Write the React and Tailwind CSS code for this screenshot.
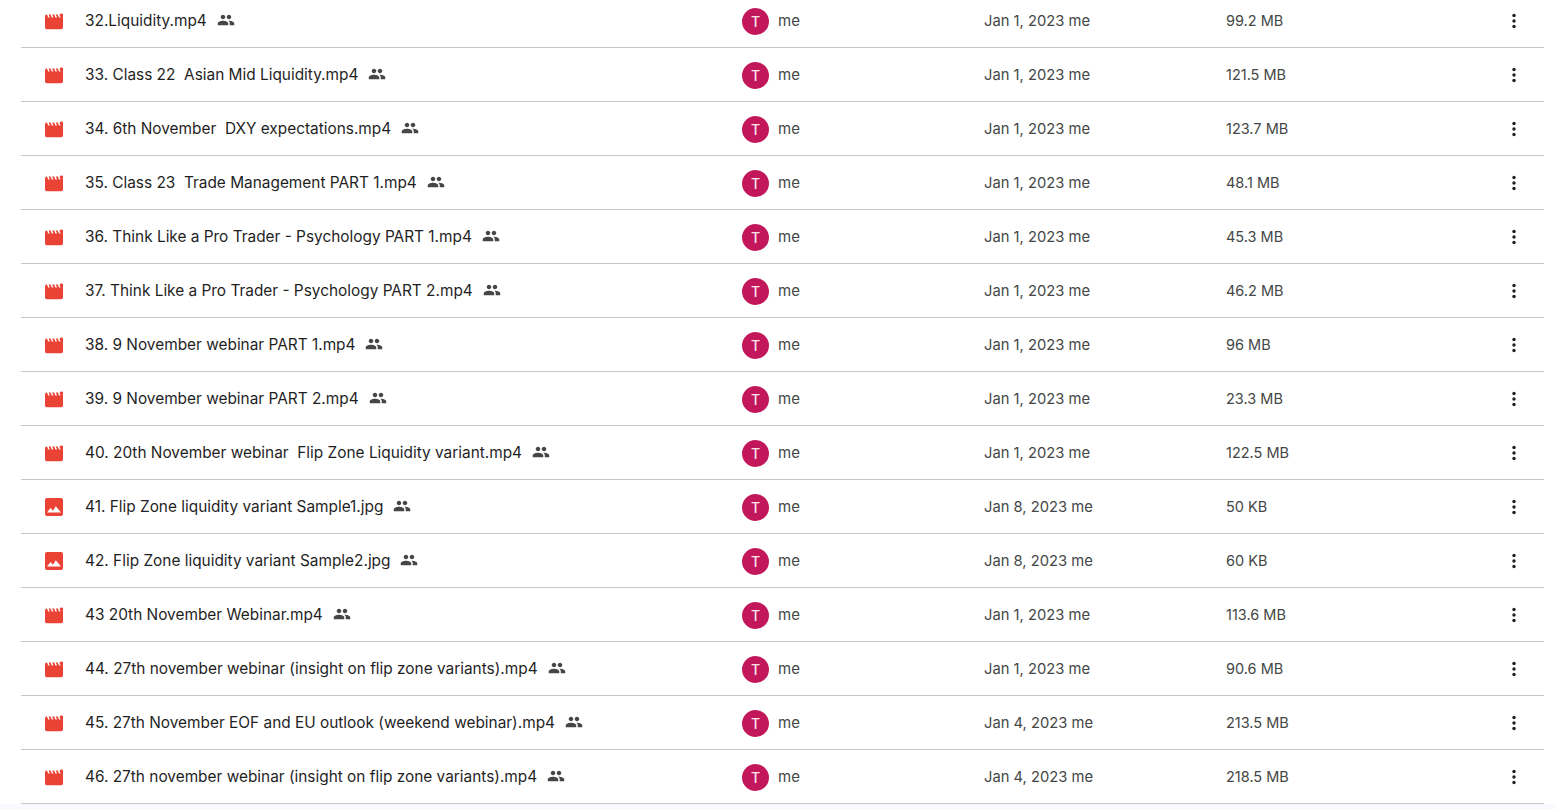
const rows = [
  ["v", "32.Liquidity.mp4", "Jan 1, 2023", "99.2 MB"],
  ["v", "33. Class 22  Asian Mid Liquidity.mp4", "Jan 1, 2023", "121.5 MB"],
  ["v", "34. 6th November  DXY expectations.mp4", "Jan 1, 2023", "123.7 MB"],
  ["v", "35. Class 23  Trade Management PART 1.mp4", "Jan 1, 2023", "48.1 MB"],
  ["v", "36. Think Like a Pro Trader - Psychology PART 1.mp4", "Jan 1, 2023", "45.3 MB"],
  ["v", "37. Think Like a Pro Trader - Psychology PART 2.mp4", "Jan 1, 2023", "46.2 MB"],
  ["v", "38. 9 November webinar PART 1.mp4", "Jan 1, 2023", "96 MB"],
  ["v", "39. 9 November webinar PART 2.mp4", "Jan 1, 2023", "23.3 MB"],
  ["v", "40. 20th November webinar  Flip Zone Liquidity variant.mp4", "Jan 1, 2023", "122.5 MB"],
  ["i", "41. Flip Zone liquidity variant Sample1.jpg", "Jan 8, 2023", "50 KB"],
  ["i", "42. Flip Zone liquidity variant Sample2.jpg", "Jan 8, 2023", "60 KB"],
  ["v", "43 20th November Webinar.mp4", "Jan 1, 2023", "113.6 MB"],
  ["v", "44. 27th november webinar (insight on flip zone variants).mp4", "Jan 1, 2023", "90.6 MB"],
  ["v", "45. 27th November EOF and EU outlook (weekend webinar).mp4", "Jan 4, 2023", "213.5 MB"],
  ["v", "46. 27th november webinar (insight on flip zone variants).mp4", "Jan 4, 2023", "218.5 MB"],
];

function VideoIcon() {
  return (
    <svg width="20" height="20" viewBox="0 0 20 20" className="mt-[2px] shrink-0">
      <path fill="#ea4335" d="M1 5.2A1.7 1.7 0 0 1 2.7 3.5h.3l1.2 3h1.6l-1.2-3h2l1.2 3h1.6l-1.2-3h2l1.2 3h1.6l-1.2-3h2l1.2 3h1.6l-1.2-3h.5A1.2 1.2 0 0 1 19 4.7v11.8a1.7 1.7 0 0 1-1.7 1.7H2.7A1.7 1.7 0 0 1 1 16.5z" />
    </svg>
  );
}

function ImageIcon() {
  return (
    <svg width="20" height="20" viewBox="0 0 20 20" className="mt-[2px] shrink-0">
      <rect x="1" y="1" width="18" height="18" rx="2" fill="#ea4335" />
      <path fill="#fff" d="M3 15.5l3.6-4.6 2.4 2.8 2.8-4.4 5.2 6.2z" />
    </svg>
  );
}

function PeopleIcon() {
  return (
    <svg width="18" height="18" viewBox="0 0 24 24" className="shrink-0" fill="#444746">
      <path d="M16 11c1.66 0 2.99-1.34 2.99-3S17.66 5 16 5s-3 1.34-3 3 1.34 3 3 3zm-8 0c1.66 0 2.99-1.34 2.99-3S9.66 5 8 5 5 6.34 5 8s1.34 3 3 3zm0 2c-2.33 0-7 1.17-7 3.5V19h14v-2.5C15 14.17 10.33 13 8 13zm8 0c-.29 0-.62.02-.97.05 1.16.84 1.97 1.97 1.97 3.45V19h6v-2.5c0-2.33-4.67-3.5-7-3.5z" />
    </svg>
  );
}

function Row({ type, name, date, size }) {
  return (
    <div className="flex h-[54px] items-center border-b border-[#c7c7c7] text-[#444746]">
      <div className="flex w-[721px] items-center pl-[23px]">
        {type === "v" ? <VideoIcon /> : <ImageIcon />}
        <span className="ml-[21px] whitespace-pre text-[15.4px] text-[#1f1f1f]">{name}</span>
        <span className="ml-[10px] flex"><PeopleIcon /></span>
      </div>
      <div className="flex w-[242px] items-center">
        <span className="mt-[2px] flex h-[27px] w-[27px] items-center justify-center rounded-full bg-[#c2185b] text-[14px] font-medium text-[#fbe4ec]">T</span>
        <span className="ml-[9px] pt-px text-[15px]">me</span>
      </div>
      <div className="w-[242px] pt-px text-[14.75px]">{date} me</div>
      <div className="w-[276px] text-[14.5px]">{size}</div>
      <svg width="24" height="24" viewBox="0 0 24 24" fill="#1f1f1f" className="shrink-0">
        <circle cx="12" cy="6.5" r="1.7" />
        <circle cx="12" cy="12" r="1.7" />
        <circle cx="12" cy="17.5" r="1.7" />
      </svg>
    </div>
  );
}

export default function App() {
  return (
    <div className="h-[809px] overflow-hidden bg-[#f8fafd] font-['Inter',sans-serif]">
      <div className="bg-white pl-[21px] pr-[12px]">
        <div className="-mt-[6px]">
          {rows.map((r) => (
            <Row key={r[1]} type={r[0]} name={r[1]} date={r[2]} size={r[3]} />
          ))}
        </div>
      </div>
    </div>
  );
}
